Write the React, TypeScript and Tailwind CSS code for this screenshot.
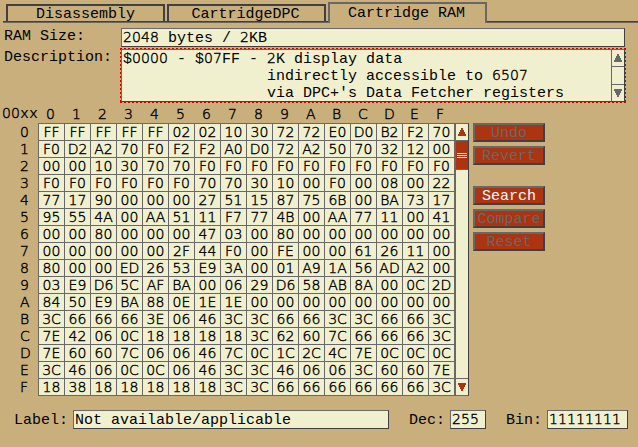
import React from "react";

const ROWS = [
  "FF FF FF FF FF 02 02 10 30 72 72 E0 D0 B2 F2 70",
  "F0 D2 A2 70 F0 F2 F2 A0 D0 72 A2 50 70 32 12 00",
  "00 00 10 30 70 70 F0 F0 F0 F0 F0 F0 F0 F0 F0 F0",
  "F0 F0 F0 F0 F0 F0 70 70 30 10 00 F0 00 08 00 22",
  "77 17 90 00 00 00 27 51 15 87 75 6B 00 BA 73 17",
  "95 55 4A 00 AA 51 11 F7 77 4B 00 AA 77 11 00 41",
  "00 00 80 00 00 00 47 03 00 80 00 00 00 00 00 00",
  "00 00 00 00 00 2F 44 F0 00 FE 00 00 61 26 11 00",
  "80 00 00 ED 26 53 E9 3A 00 01 A9 1A 56 AD A2 00",
  "03 E9 D6 5C AF BA 00 06 29 D6 58 AB 8A 00 0C 2D",
  "84 50 E9 BA 88 0E 1E 1E 00 00 00 00 00 00 00 00",
  "3C 66 66 66 3E 06 46 3C 3C 66 66 3C 3C 66 66 3C",
  "7E 42 06 0C 18 18 18 18 3C 62 60 7C 66 66 66 3C",
  "7E 60 60 7C 06 06 46 7C 0C 1C 2C 4C 7E 0C 0C 0C",
  "3C 46 06 0C 0C 06 46 3C 3C 46 06 06 3C 60 60 7E",
  "18 38 18 18 18 18 18 3C 3C 66 66 66 66 66 66 3C",
].map((r) => r.split(" "));

const HEX = "0123456789ABCDEF".split("");

/* Monospaced text whose digits are drawn thin and open, without a dot in the zero. */
function T({ children }: { children: string }) {
  return (
    <>
      {children.split(/([0-9]+)/).map((part, i) =>
        /^[0-9]/.test(part) ? (
          <span key={i} className="font-['DejaVu_Sans',sans-serif] text-[14px] leading-[0px] font-extralight tracking-[0.1px] [-webkit-text-stroke:0.4px_#000]">{part}</span>
        ) : (
          part
        ),
      )}
    </>
  );
}

function Field({ text, className }: { text: string; className: string }) {
  return (
    <div className={`h-[19px] shrink-0 border border-t-[#686868] border-l-[#686868] border-r-[#404040] border-b-[#404040] bg-[#f0f0cf] pt-[1px] pl-[1px] ${className}`}>
      <T>{text}</T>
    </div>
  );
}

function Tab({ text, className = "" }: { text: string; className?: string }) {
  return (
    <div className="h-[19px] w-[159px] border-b border-[#686868]">
      <div className={`h-[18px] border-2 border-b border-[#404040] text-center ${className}`}>{text}</div>
    </div>
  );
}

function Gap({ className }: { className: string }) {
  return <div className={`h-[2px] border-t border-b border-t-[#404040] border-b-[#686868] ${className}`} />;
}

function Button({ text, enabled, className = "" }: { text: string; enabled?: boolean; className?: string }) {
  return (
    <button
      className={`block h-[19px] w-[72px] border-2 border-t-[#686868] border-l-[#686868] border-r-[#404040] border-b-[#404040] bg-[#ac3410] text-center ${enabled ? "text-white" : "text-[#686868]"} ${className}`}
    >
      <span className="block h-[15px] leading-[17px]">{text}</span>
    </button>
  );
}

function Arrow({ down, color }: { down?: boolean; color: string }) {
  return (
    <svg width="8" height="8" viewBox="0 0 8 8" fill={color} shapeRendering="crispEdges" className={down ? "rotate-180" : ""}>
      <path d="M3 0h2v2h1v2h1v2h1v2H0V6h1V4h1V2h1z" />
    </svg>
  );
}

export default function App() {
  return (
    <div className="flex h-[447px] w-[638px] flex-col overflow-hidden whitespace-pre bg-[#c9af7c] font-['Liberation_Mono',monospace] text-[15px] leading-[17px] text-black">
      <div className="flex h-[23px] shrink-0 items-end pl-[3px]">
        <Gap className="w-[3px]" />
        <Tab text="Disassembly" />
        <Gap className="w-[2px]" />
        <Tab text="CartridgeDPC" className="pr-[2px]" />
        <Gap className="w-[2px]" />
        <div className="h-[21px] w-[159px] border-2 border-b-0 border-[#686868] pt-[1px] pr-[2px] text-center">Cartridge RAM</div>
        <Gap className="flex-1" />
      </div>

      <div className="flex h-[25px] shrink-0 pl-[4px] pt-[5px]">
        <div className="w-[117px]">RAM Size:</div>
        <Field text="2048 bytes / 2KB" className="w-[504px]" />
      </div>

      <div className="flex h-[55px] shrink-0 pl-[4px]">
        <div className="w-[116px] pt-[1px]">Description:</div>
        <div className="relative h-[55px] w-[506px] p-[1px]">
          <div className="flex h-[53px] border border-t-[#686868] border-l-[#686868] border-r-[#404040] border-b-[#404040] bg-[#f0f0cf]">
            <div className="w-[489px] pl-[1px] pt-[1px]">
              <div className="h-[17px]"><T>$0000 - $07FF - 2K display data</T></div>
              <div className="h-[17px]"><T>{"                indirectly accessible to 6507"}</T></div>
              <div className="h-[16px]">{"                via DPC+'s Data Fetcher registers"}</div>
            </div>
            <div className="flex w-[13px] flex-col border-l border-[#686868]">
              <div className="flex h-[16px] items-center justify-center"><Arrow color="#686868" /></div>
              <div className="h-[19px] border-y border-[#686868]" />
              <div className="flex h-[16px] items-center justify-center"><Arrow down color="#686868" /></div>
            </div>
          </div>
          <svg className="absolute inset-0" width="506" height="55" shapeRendering="crispEdges">
            <path d="M0 .5H506M0 54.5H506M.5 0V55M505.5 0V55" stroke="#d00000" strokeDasharray="2 2" fill="none" />
          </svg>
        </div>
      </div>

      <div className="flex h-[20px] shrink-0 pl-[2px] pt-[3px]">
        <div className="w-[44px]"><T>00xx</T></div>
        {HEX.map((h) => (
          <div key={h} className="w-[26px] font-['DejaVu_Sans',sans-serif] text-[14px] font-extralight [-webkit-text-stroke:0.4px_#000]">{h}</div>
        ))}
      </div>

      <div className="flex h-[273px] shrink-0 pl-[20px]">
        <div className="w-[18px] pt-[1px] font-['DejaVu_Sans',sans-serif] text-[14px] font-extralight [-webkit-text-stroke:0.4px_#000]">
          {HEX.map((h) => (
            <div key={h} className="h-[17px]">{h}</div>
          ))}
        </div>
        <div className="grid w-[417px] grid-cols-[repeat(16,25px)] grid-rows-[repeat(16,16px)] gap-[1px] border border-[#686868] bg-[#686868] text-center font-['DejaVu_Sans',sans-serif] text-[14px] font-extralight [-webkit-text-stroke:0.4px_#000]">
          {ROWS.flatMap((row, r) =>
            row.map((v, c) => (
              <div key={`${r}-${c}`} className="bg-[#f0f0cf]">{v}</div>
            )),
          )}
        </div>
        <div className="flex w-[14px] flex-col border border-[#686868] border-r-[#404040] bg-[#f0f0cf]">
          <div className="flex h-[16px] items-center justify-center"><Arrow color="#ac3410" /></div>
          <div className="flex h-[30px] flex-col items-center gap-[1px] border-y border-[#686868] bg-[#ac3410] pt-[12px]">
            <div className="h-px w-[10px] bg-[#f0f0cf]" />
            <div className="h-px w-[10px] bg-[#f0f0cf]" />
            <div className="h-px w-[10px] bg-[#f0f0cf]" />
          </div>
          <div className="flex-1" />
          <div className="flex h-[17px] items-center justify-center border-t border-[#686868]"><Arrow down color="#ac3410" /></div>
        </div>
        <div className="pl-[4px]">
          <Button text="Undo" />
          <Button text="Revert" className="mt-[4px]" />
          <Button text="Search" enabled className="mt-[21px]" />
          <Button text="Compare" className="mt-[4px]" />
          <Button text="Reset" className="mt-[4px]" />
        </div>
      </div>

      <div className="flex shrink-0 pl-[14px] pt-[14px]">
        <div className="w-[59px] pt-[2px]">Label:</div>
        <Field text="Not available/applicable" className="w-[316px]" />
        <div className="ml-[20px] w-[41px] pt-[2px]">Dec:</div>
        <Field text="255" className="w-[36px]" />
        <div className="ml-[20px] w-[41px] pt-[2px]">Bin:</div>
        <Field text="11111111" className="w-[81px]" />
      </div>
    </div>
  );
}
